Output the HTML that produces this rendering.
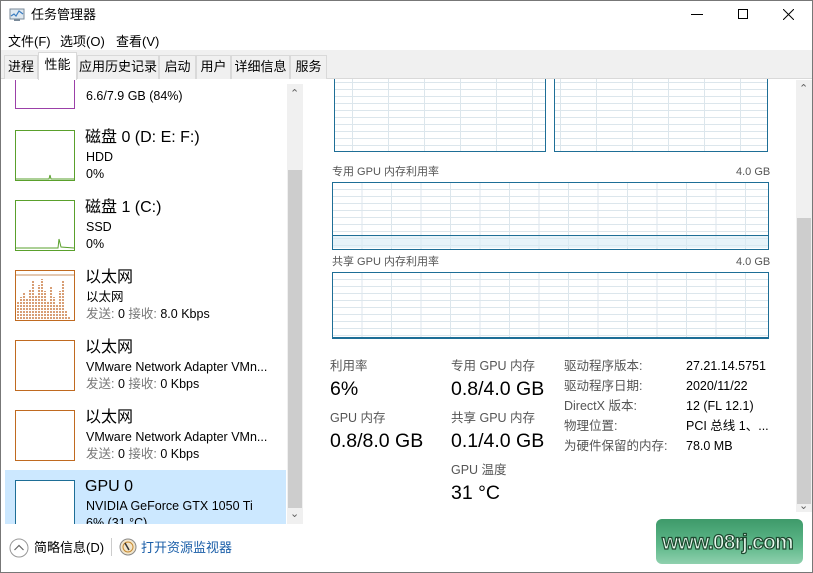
<!DOCTYPE html>
<html><head><meta charset="utf-8"><style>
*{margin:0;padding:0;box-sizing:border-box}
body{width:813px;height:573px;overflow:hidden;background:#fff;font-family:"Liberation Sans","Noto Sans CJK SC",sans-serif;color:#000;position:relative}
.a{position:absolute;white-space:nowrap;line-height:1.2}
.win{position:absolute;left:0;top:0;width:813px;height:573px;border:1px solid #777}
.tabbar{position:absolute;left:1px;top:50px;width:811px;height:29px;background:#f0f0f0;border-bottom:1px solid #d9d9d9}
.tab{position:absolute;top:55px;height:24px;font-size:13px;line-height:22px;text-align:center;background:#f0f0f0;border:1px solid #d9d9d9;border-bottom:none}
.thumb{position:absolute;left:15px;width:60px;height:51px;background:#fff}
.t1{font-size:16px;margin-top:3px}
.t2{font-size:12.5px;margin-top:3px}
.g{color:#777}
.grid{position:absolute;border:1.5px solid #1e6e96;background-color:#fff;
background-image:linear-gradient(to right,#dce6ec 1px,transparent 1px),linear-gradient(to bottom,#dce6ec 1px,transparent 1px)}
.lab{font-size:11px;color:#555;margin-top:2px}
.sl{font-size:12.5px;color:#555;margin-top:3px}
.sv{font-size:19.5px;margin-top:3px}
.dl{font-size:12.5px;color:#555;margin-top:3px}
.dv{font-size:12.5px;margin-top:3px}
.mn{font-size:13px;margin-top:2px}
</style></head><body>
<div class="win"></div>
<svg class="a" style="left:9px;top:8px" width="16" height="14"><rect x="1" y="1" width="14" height="10" fill="#dfe8f0" stroke="#7a8a99"/><polyline points="2,8 5,6 7,8 10,3 14,6" fill="none" stroke="#3a7cc0" stroke-width="1.2"/><rect x="5" y="11" width="6" height="2" fill="#7a8a99"/></svg>
<div class="a" style="left:31px;top:7px;font-size:13px">任务管理器</div>
<div class="a" style="left:691px;top:14px;width:12px;height:1px;background:#000"></div>
<div class="a" style="left:738px;top:9px;width:10px;height:10px;border:1px solid #000"></div>
<svg class="a" style="left:783px;top:9px" width="11" height="11"><path d="M0 0L11 11M11 0L0 11" stroke="#000" stroke-width="1"/></svg>
<div class="a mn" style="left:8px;top:32px">文件(F)</div>
<div class="a mn" style="left:60px;top:32px">选项(O)</div>
<div class="a mn" style="left:116px;top:32px">查看(V)</div>
<div class="tabbar"></div>
<div class="tab" style="left:4px;width:34px">进程</div>
<div class="tab" style="left:38px;top:52px;height:28px;width:39px;background:#fff;line-height:24px">性能</div>
<div class="tab" style="left:77px;width:82px">应用历史记录</div>
<div class="tab" style="left:159px;width:37px">启动</div>
<div class="tab" style="left:196px;width:35px">用户</div>
<div class="tab" style="left:231px;width:59px">详细信息</div>
<div class="tab" style="left:290px;width:37px">服务</div>
<div class="a" style="left:1px;top:80px;width:302px;height:444px;overflow:hidden">
 <div class="thumb" style="left:14px;top:-10px;height:39px;border:1px solid #9b40a8"></div>
 <div class="a t2" style="left:85px;top:6px">6.6/7.9 GB (84%)</div>

 <div class="thumb" style="left:14px;top:50px;border:1px solid #5aa02c"></div>
 <svg class="a" style="left:15px;top:51px" width="58" height="49"><path d="M0 48 L33 48 L34 44 L35 48 L58 48" stroke="#5aa02c" fill="none"/></svg>
 <div class="a t1" style="left:84px;top:45px">磁盘 0 (D: E: F:)</div>
 <div class="a t2" style="left:85px;top:67px">HDD</div>
 <div class="a t2" style="left:85px;top:84px">0%</div>

 <div class="thumb" style="left:14px;top:120px;border:1px solid #5aa02c"></div>
 <svg class="a" style="left:15px;top:121px" width="58" height="49"><path d="M0 47 L42 47 L43 38 L45 46 L58 47" stroke="#5aa02c" fill="none"/></svg>
 <div class="a t1" style="left:84px;top:115px">磁盘 1 (C:)</div>
 <div class="a t2" style="left:85px;top:137px">SSD</div>
 <div class="a t2" style="left:85px;top:154px">0%</div>

 <div class="thumb" style="left:14px;top:190px;border:1px solid #c06a20"></div>
 <svg class="a" style="left:15px;top:191px" width="58" height="49"><line x1="0" y1="4" x2="58" y2="4" stroke="#c89060"/><path d="M2 48V30M5 48V26M8 48V22M11 48V28M14 48V18M17 48V10M20 48V24M23 48V14M26 48V8M29 48V20M32 48V30M35 48V16M38 48V26M41 48V34M44 48V20M47 48V10M50 48V40M53 48V46" stroke="#c8743a" stroke-width="1.4" stroke-dasharray="2 1"/></svg>
 <div class="a t1" style="left:84px;top:185px">以太网</div>
 <div class="a t2" style="left:85px;top:207px">以太网</div>
 <div class="a t2" style="left:85px;top:224px"><span class="g">发送:</span> 0 <span class="g">接收:</span> 8.0 Kbps</div>

 <div class="thumb" style="left:14px;top:260px;border:1px solid #c06a20"></div>
 <div class="a t1" style="left:84px;top:255px">以太网</div>
 <div class="a t2" style="left:85px;top:277px">VMware Network Adapter VMn...</div>
 <div class="a t2" style="left:85px;top:294px"><span class="g">发送:</span> 0 <span class="g">接收:</span> 0 Kbps</div>

 <div class="thumb" style="left:14px;top:330px;border:1px solid #c06a20"></div>
 <div class="a t1" style="left:84px;top:325px">以太网</div>
 <div class="a t2" style="left:85px;top:347px">VMware Network Adapter VMn...</div>
 <div class="a t2" style="left:85px;top:364px"><span class="g">发送:</span> 0 <span class="g">接收:</span> 0 Kbps</div>

 <div class="a" style="left:4px;top:390px;width:281px;height:60px;background:#cce8ff"></div>
 <div class="thumb" style="left:14px;top:400px;border:1px solid #1e6e96"></div>
 <div class="a t1" style="left:84px;top:394px">GPU 0</div>
 <div class="a t2" style="left:85px;top:416px">NVIDIA GeForce GTX 1050 Ti</div>
 <div class="a t2" style="left:85px;top:433px">6% (31 °C)</div>
 <div class="a" style="left:286px;top:4px;width:16px;height:440px;background:#f0f0f0"></div>
 <div class="a" style="left:287px;top:90px;width:14px;height:338px;background:#cdcdcd"></div>
 <div class="a" style="left:289px;top:8px;font-size:11px;color:#606060">&#8963;</div>
 <div class="a" style="left:289px;top:428px;font-size:11px;color:#606060">&#8964;</div>
</div>
<div class="grid" style="left:334px;top:79px;width:212px;height:73px;background-size:36px 100%,100% 7px;background-position:17px 0,0 3px;border-top:none"></div>
<div class="grid" style="left:554px;top:79px;width:214px;height:73px;background-size:36px 100%,100% 7px;background-position:5px 0,0 3px;border-top:none"></div>
<div class="a lab" style="left:332px;top:164px">专用 GPU 内存利用率</div>
<div class="a lab" style="left:736px;top:164px">4.0 GB</div>
<div class="grid" style="left:332px;top:182px;width:437px;height:68px;background-size:29.5px 100%,100% 7px;background-position:-1px 0,0 -1px"></div>
<div class="a" style="left:333px;top:235px;width:435px;height:13px;background:rgba(215,235,245,.6);border-top:1.5px solid #1e6e96"></div>
<div class="a lab" style="left:332px;top:254px">共享 GPU 内存利用率</div>
<div class="a lab" style="left:736px;top:254px">4.0 GB</div>
<div class="grid" style="left:332px;top:272px;width:437px;height:67px;background-size:29.5px 100%,100% 7px;background-position:-1px 0,0 -1px;border-bottom:2.5px solid #1e6e96"></div>
<div class="a sl" style="left:330px;top:356px">利用率</div>
<div class="a sv" style="left:330px;top:375px">6%</div>
<div class="a sl" style="left:330px;top:408px">GPU 内存</div>
<div class="a sv" style="left:330px;top:427px">0.8/8.0 GB</div>
<div class="a sl" style="left:451px;top:356px">专用 GPU 内存</div>
<div class="a sv" style="left:451px;top:375px">0.8/4.0 GB</div>
<div class="a sl" style="left:451px;top:408px">共享 GPU 内存</div>
<div class="a sv" style="left:451px;top:427px">0.1/4.0 GB</div>
<div class="a sl" style="left:451px;top:460px">GPU 温度</div>
<div class="a sv" style="left:451px;top:479px">31 °C</div>
<div class="a dl" style="left:564px;top:356px">驱动程序版本:</div>
<div class="a dv" style="left:686px;top:356px">27.21.14.5751</div>
<div class="a dl" style="left:564px;top:376px">驱动程序日期:</div>
<div class="a dv" style="left:686px;top:376px">2020/11/22</div>
<div class="a dl" style="left:564px;top:396px">DirectX 版本:</div>
<div class="a dv" style="left:686px;top:396px">12 (FL 12.1)</div>
<div class="a dl" style="left:564px;top:416px">物理位置:</div>
<div class="a dv" style="left:686px;top:416px">PCI 总线 1、...</div>
<div class="a dl" style="left:564px;top:436px">为硬件保留的内存:</div>
<div class="a dv" style="left:686px;top:436px">78.0 MB</div>
<div class="a" style="left:796px;top:80px;width:16px;height:432px;background:#f0f0f0"></div>
<div class="a" style="left:797px;top:218px;width:14px;height:286px;background:#cdcdcd"></div>
<div class="a" style="left:799px;top:83px;font-size:11px;color:#606060">&#8963;</div>
<div class="a" style="left:799px;top:500px;font-size:11px;color:#606060">&#8964;</div>
<svg class="a" style="left:9px;top:538px" width="20" height="20"><circle cx="10" cy="10" r="9" fill="none" stroke="#999"/><path d="M5.5 12L10 7.5L14.5 12" fill="none" stroke="#666" stroke-width="1.2"/></svg>
<div class="a" style="left:34px;top:540px;font-size:13px">简略信息(D)</div>
<div class="a" style="left:111px;top:538px;width:1px;height:18px;background:#ccc"></div>
<svg class="a" style="left:119px;top:538px" width="18" height="18"><circle cx="9" cy="9" r="8" fill="#f2e6cc" stroke="#888"/><circle cx="9" cy="9" r="5" fill="none" stroke="#c88a30"/><path d="M6 5L10 12" stroke="#333" stroke-width="1.5"/></svg>
<div class="a" style="left:141px;top:540px;font-size:13px;color:#1a5ea8">打开资源监视器</div>
<div class="a" style="left:656px;top:519px;width:147px;height:45px;border-radius:6px;background:linear-gradient(#3e9a6a,#5fb88a 60%,#8fd0ae);"></div>
<div class="a" style="left:662px;top:530px;font-size:21px;font-weight:bold;color:#e8f8ee;-webkit-text-stroke:1.2px #1e4a30;letter-spacing:-0.8px">www.08rj.com</div>
</body></html>
